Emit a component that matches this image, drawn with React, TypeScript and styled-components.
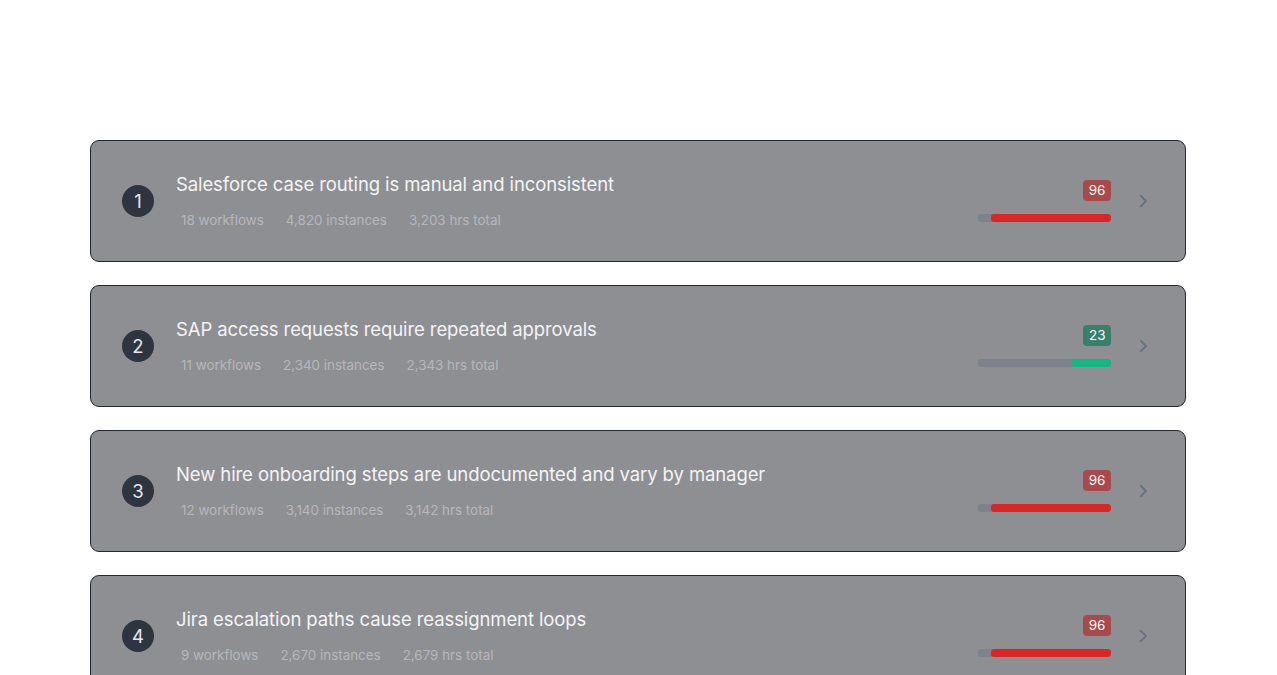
import React from "react"
import styled, { createGlobalStyle } from "styled-components"

const GlobalStyle = createGlobalStyle`
  html, body {
    margin: 0;
    padding: 0;
    background: #ffffff;
    font-family: Inter, "Noto Sans", sans-serif;
  }
`

interface Issue {
  title: string
  workflows: number
  instances: string
  hours: string
  score: number
  fill: number
}

const issues: Issue[] = [
  {
    title: "Salesforce case routing is manual and inconsistent",
    workflows: 18,
    instances: "4,820",
    hours: "3,203",
    score: 96,
    fill: 90,
  },
  {
    title: "SAP access requests require repeated approvals",
    workflows: 11,
    instances: "2,340",
    hours: "2,343",
    score: 23,
    fill: 29,
  },
  {
    title: "New hire onboarding steps are undocumented and vary by manager",
    workflows: 12,
    instances: "3,140",
    hours: "3,142",
    score: 96,
    fill: 90,
  },
  {
    title: "Jira escalation paths cause reassignment loops",
    workflows: 9,
    instances: "2,670",
    hours: "2,679",
    score: 96,
    fill: 90,
  },
]

const Page = styled.div`
  height: 675px;
  overflow: hidden;
  padding: 140px 91px 0 90px;
  box-sizing: border-box;
  display: flex;
  flex-direction: column;
  gap: 23px;
`

const Card = styled.div`
  height: 122px;
  flex-shrink: 0;
  box-sizing: border-box;
  background: #8e8f93;
  border: 1px solid #23272f;
  border-radius: 9px;
  display: flex;
  align-items: center;
  padding: 0 33px 0 31px;
`

const Rank = styled.div`
  width: 32px;
  height: 32px;
  border-radius: 50%;
  background: #2e3440;
  color: #e5e7eb;
  font-size: 18.5px;
  display: flex;
  align-items: center;
  justify-content: center;
  flex-shrink: 0;
`

const Body = styled.div`
  flex: 1;
  margin-left: 22px;
  display: flex;
  flex-direction: column;
  gap: 15px;
  margin-bottom: 1px;
`

const Title = styled.div`
  color: #f4f4f5;
  font-size: 18.5px;
  line-height: 24px;
  letter-spacing: -0.1px;
`

const Meta = styled.div`
  display: flex;
  gap: 22px;
  padding-left: 5px;
  color: #b6b7bb;
  font-size: 13.4px;
  line-height: 18px;
`

const Score = styled.div`
  display: flex;
  flex-direction: column;
  align-items: flex-end;
  gap: 13px;
`

const Badge = styled.div<{ $high: boolean }>`
  background: ${(p) => (p.$high ? "#a84a4c" : "#3a7f69")};
  color: #f9fafb;
  font-size: 13.5px;
  line-height: 21px;
  height: 21px;
  padding: 0 5.5px;
  border-radius: 4px;
`

const Track = styled.div`
  width: 133px;
  height: 8px;
  border-radius: 3px;
  background: #7d828d;
  display: flex;
  justify-content: flex-end;
  overflow: hidden;
`

const Fill = styled.div<{ $high: boolean }>`
  height: 100%;
  border-radius: 3px;
  background: ${(p) => (p.$high ? "#dc2626" : "#10b981")};
`

const Chevron = styled.svg`
  margin-left: 23px;
  flex-shrink: 0;
  color: #687081;
`

export default function App() {
  return (
    <>
      <GlobalStyle />
      <Page>
        {issues.map((it, i) => {
          const high = it.score >= 50
          return (
            <Card key={i}>
              <Rank>{i + 1}</Rank>
              <Body>
                <Title>{it.title}</Title>
                <Meta>
                  <span>{it.workflows} workflows</span>
                  <span>{it.instances} instances</span>
                  <span>{it.hours} hrs total</span>
                </Meta>
              </Body>
              <Score>
                <Badge $high={high}>{it.score}</Badge>
                <Track>
                  <Fill $high={high} style={{ width: `${it.fill}%` }} />
                </Track>
              </Score>
              <Chevron width="18" height="18" viewBox="0 0 24 24" fill="none" stroke="currentColor" strokeWidth="2.4" strokeLinecap="round" strokeLinejoin="round">
                <path d="M9 5l7 7-7 7" />
              </Chevron>
            </Card>
          )
        })}
      </Page>
    </>
  )
}
